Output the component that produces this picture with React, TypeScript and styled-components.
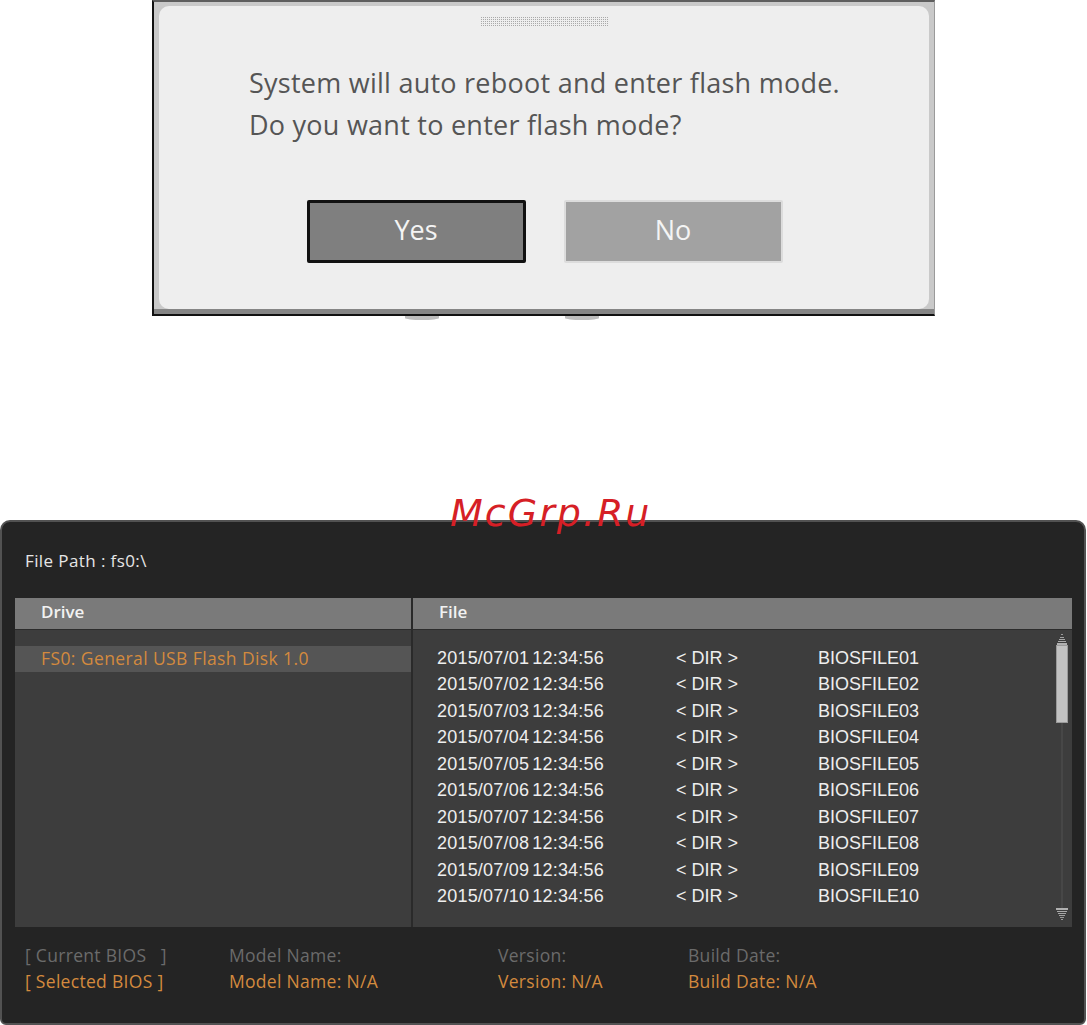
import styled, { createGlobalStyle } from 'styled-components'

const GlobalStyle = createGlobalStyle`
  html, body {
    margin: 0;
    padding: 0;
    background: #ffffff;
  }
  body {
    font-family: 'Open Sans', 'Noto Sans', sans-serif;
  }
`

const Colors = {
  Orange: '#d38a3e',
  DimText: '#6b6b6b',
  PanelBg: '#242424',
  TableBg: '#3d3d3d',
  Header: '#7a7a7a',
}

const files = Array.from({ length: 10 }, (_, i) => {
  const n = String(i + 1).padStart(2, '0')
  return { date: `2015/07/${n} 12:34:56`, type: '< DIR >', name: `BIOSFILE${n}` }
})

const ArrowUp = () => (
  <svg width="12" height="11" viewBox="0 0 12 11">
    <rect x="5" y="0" width="2" height="1" fill="#9a9a9a" />
    <rect x="4" y="3" width="4" height="1" fill="#a0a0a0" />
    <rect x="3" y="5" width="6" height="1" fill="#a6a6a6" />
    <rect x="2" y="7" width="8" height="1" fill="#aaaaaa" />
    <rect x="1" y="9" width="10" height="2" fill="#b0b0b0" />
  </svg>
)

const ArrowDown = () => (
  <svg width="12" height="12" viewBox="0 0 12 12">
    <rect x="0" y="0" width="12" height="2" fill="#b0b0b0" />
    <rect x="1" y="3" width="10" height="1" fill="#aaaaaa" />
    <rect x="2" y="5" width="8" height="1" fill="#a6a6a6" />
    <rect x="3" y="7" width="6" height="1" fill="#a0a0a0" />
    <rect x="4" y="9" width="4" height="1" fill="#9a9a9a" />
    <rect x="5" y="11" width="2" height="1" fill="#9a9a9a" />
  </svg>
)

export default function App() {
  return (
    <Page>
      <GlobalStyle />
      <DialogFrame>
        <DialogBody>
          <Grip />
          <Message>
            System will auto reboot and enter flash mode.
            <br />
            Do you want to enter flash mode?
          </Message>
          <ButtonRow>
            <DialogButton $active>Yes</DialogButton>
            <DialogButton>No</DialogButton>
          </ButtonRow>
        </DialogBody>
      </DialogFrame>
      <Peeks>
        <Peek $gap={126} />
        <Peek />
      </Peeks>

      <Panel>
        <Watermark>McGrp.Ru</Watermark>
        <FilePath>File Path : fs0:\</FilePath>
        <Table>
          <HeaderRow>
            <HeaderCell $width={396}>Drive</HeaderCell>
            <ColumnDivider />
            <HeaderCell>File</HeaderCell>
          </HeaderRow>
          <BodyRow>
            <DriveColumn>
              <DriveItem>FS0: General USB Flash Disk 1.0</DriveItem>
            </DriveColumn>
            <ColumnDivider />
            <FileColumn>
              <FileList>
                {files.map((f) => (
                  <FileRow key={f.name}>
                    <DateCell>{f.date}</DateCell>
                    <span>{f.type}</span>
                    <span>{f.name}</span>
                  </FileRow>
                ))}
              </FileList>
              <ScrollBar>
                <ArrowUp />
                <Track>
                  <Thumb />
                </Track>
                <ArrowDown />
              </ScrollBar>
            </FileColumn>
          </BodyRow>
        </Table>
        <InfoGrid>
          <InfoCell>[ Current BIOS&nbsp;&nbsp;&nbsp;]</InfoCell>
          <InfoCell>Model Name:</InfoCell>
          <InfoCell>Version:</InfoCell>
          <InfoCell>Build Date:</InfoCell>
          <InfoCell $selected>[ Selected BIOS ]</InfoCell>
          <InfoCell $selected>Model Name: N/A</InfoCell>
          <InfoCell $selected>Version: N/A</InfoCell>
          <InfoCell $selected>Build Date: N/A</InfoCell>
        </InfoGrid>
      </Panel>
    </Page>
  )
}

const Page = styled.div`
  width: 1087px;
  height: 1025px;
  overflow: hidden;
  display: flex;
  flex-direction: column;
`

const DialogFrame = styled.div`
  margin-left: 152px;
  width: 783px;
  height: 316px;
  box-sizing: border-box;
  border-top: 2px solid #5e5e5e;
  border-left: 2px solid #111111;
  border-bottom: 2px solid #111111;
  border-right: 1px solid #9a9a9a;
  padding: 4px 5px 5px 5px;
  background: linear-gradient(to top, #858585 0 5px, #c9c9c9 5px);
  display: flex;
`

const DialogBody = styled.div`
  flex: 1;
  background: #eeeeee;
  border-radius: 10px;
  display: flex;
  flex-direction: column;
  align-items: center;
`

const Grip = styled.div`
  width: 127px;
  height: 11px;
  margin-top: 10px;
  background:
    repeating-linear-gradient(0deg, #eeeeee 0 1px, transparent 1px 2px),
    repeating-linear-gradient(90deg, #a9a9a9 0 1px, #eeeeee 1px 2px);
`

const Message = styled.div`
  align-self: flex-start;
  margin: 35px 0 0 90px;
  font-family: 'Open Sans', sans-serif;
  font-size: 27px;
  line-height: 42px;
  color: #555555;
  letter-spacing: 0.25px;
`

const ButtonRow = styled.div`
  display: flex;
  gap: 38px;
  margin-top: 54px;
  margin-left: 1px;
`

const DialogButton = styled.div<{ $active?: boolean }>`
  width: 219px;
  height: 63px;
  box-sizing: border-box;
  display: flex;
  align-items: center;
  justify-content: center;
  padding-bottom: 5px;
  font-size: 27px;
  color: #f4f4f4;
  background: ${({ $active }) => ($active ? '#7f7f7f' : '#a2a2a2')};
  border: ${({ $active }) => ($active ? '3px solid #111111' : '2px solid #dcdcdc')};
  border-radius: 2px;
`

const Peeks = styled.div`
  height: 4px;
  margin-left: 405px;
  display: flex;
`

const Peek = styled.div<{ $gap?: number }>`
  width: 34px;
  height: 4px;
  margin-right: ${({ $gap }) => $gap ?? 0}px;
  border-radius: 0 0 50% 50%;
  background: #bdbdbd;
`

const Panel = styled.div`
  position: relative;
  margin-top: 200px;
  width: 1086px;
  height: 505px;
  box-sizing: border-box;
  background: ${Colors.PanelBg};
  border: 2px solid #525252;
  border-radius: 10px 10px 6px 6px;
  padding: 0 12px 0 13px;
  display: flex;
  flex-direction: column;
`

const Watermark = styled.div`
  position: absolute;
  top: -31px;
  left: 448px;
  font-family: 'DejaVu Sans', sans-serif;
  font-style: italic;
  font-size: 38px;
  letter-spacing: 2px;
  color: #d61f26;
`

const FilePath = styled.div`
  padding: 28px 0 0 10px;
  height: 48px;
  line-height: 22px;
  font-size: 17px;
  letter-spacing: 0.4px;
  color: #e6e6e6;
`

const Table = styled.div`
  display: flex;
  flex-direction: column;
`

const HeaderRow = styled.div`
  display: flex;
  height: 31px;
  background: ${Colors.Header};
  border-bottom: 1px solid #2c2c2c;
`

const HeaderCell = styled.div<{ $width?: number }>`
  ${({ $width }) => ($width ? `width: ${$width}px;` : 'flex: 1;')}
  padding-left: 26px;
  box-sizing: border-box;
  line-height: 27px;
  font-size: 17px;
  font-weight: 600;
  color: #f2f2f2;
`

const ColumnDivider = styled.div`
  width: 2px;
  background: #2a2a2a;
`

const BodyRow = styled.div`
  display: flex;
  height: 297px;
  background: ${Colors.TableBg};
`

const DriveColumn = styled.div`
  width: 396px;
  padding-top: 16px;
`

const DriveItem = styled.div`
  height: 26px;
  line-height: 24px;
  padding-left: 26px;
  background: #555555;
  font-size: 17.5px;
  letter-spacing: 0.4px;
  color: ${Colors.Orange};
`

const FileColumn = styled.div`
  flex: 1;
  display: flex;
`

const FileList = styled.div`
  flex: 1;
  padding: 15px 0 0 24px;
`

const FileRow = styled.div`
  display: grid;
  grid-template-columns: 239px 142px auto;
  height: 26.45px;
  line-height: 26px;
  font-family: 'Liberation Sans', Arial, sans-serif;
  font-size: 18px;
  color: #eeeeee;
`

const DateCell = styled.span`
  word-spacing: -2px;
  letter-spacing: 0.2px;
`

const ScrollBar = styled.div`
  width: 12px;
  margin: 4px 4px 0 0;
  display: flex;
  flex-direction: column;
  align-items: center;
  height: 286px;
`

const Track = styled.div`
  flex: 1;
  width: 12px;
  background: linear-gradient(90deg, transparent 5px, #474747 5px 7px, transparent 7px);
`

const Thumb = styled.div`
  width: 12px;
  height: 78px;
  background: #c2c2c2;
  border: 1px solid #9a9a9a;
  box-sizing: border-box;
`

const InfoGrid = styled.div`
  display: grid;
  grid-template-columns: 204px 269px 190px auto;
  margin-top: 15px;
  padding-left: 10px;
`

const InfoCell = styled.div<{ $selected?: boolean }>`
  height: 26px;
  line-height: 26px;
  font-size: 17.5px;
  letter-spacing: 0.3px;
  color: ${({ $selected }) => ($selected ? Colors.Orange : Colors.DimText)};
  white-space: pre;
`
